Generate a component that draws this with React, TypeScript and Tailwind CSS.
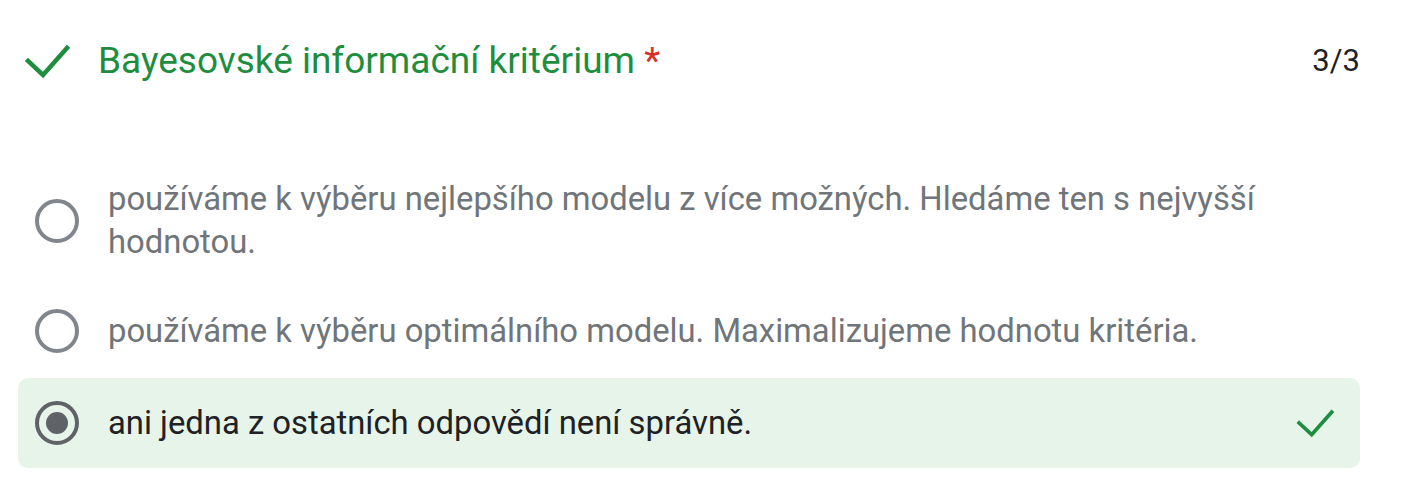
const Radio = ({ selected }: { selected?: boolean }) => (
    <div
        className={`flex h-[44px] w-[44px] shrink-0 items-center justify-center rounded-full border-[4px] ${
            selected ? "border-[#5f6368]" : "border-[#80868b]"
        }`}
    >
        {selected && <div className="h-[22px] w-[22px] rounded-full bg-[#5f6368]" />}
    </div>
);

const Check = ({ className }: { className?: string }) => (
    <svg viewBox="0 0 48 48" className={className} fill="none">
        <path d="M5 24 L20 38 L44 11" stroke="#1e8e3e" strokeWidth="4.5" strokeLinecap="square" />
    </svg>
);

export default function App() {
    return (
        <div className="h-[489px] w-[1407px] overflow-hidden bg-white font-['Roboto',sans-serif]">
            <div className="flex items-center justify-between pl-[23px] pr-[47px] pt-[37px]">
                <div className="flex items-center gap-[27px]">
                    <Check className="h-[48px] w-[48px]" />
                    <span className="text-[37px] leading-[48px] text-[#1e8e3e]">
                        Bayesovské informační kritérium <span className="text-[#d93025]">*</span>
                    </span>
                </div>
                <span className="text-[31px] text-[#202124]">3/3</span>
            </div>

            <div className="mt-[93px] flex items-center gap-[29px] pl-[35px] pr-[47px]">
                <Radio />
                <p className="text-[32.8px] leading-[43px] text-[#70757a]">
                    používáme k výběru nejlepšího modelu z více možných. Hledáme ten s nejvyšší
                    <br />
                    hodnotou.
                </p>
            </div>

            <div className="mt-[45px] flex items-center gap-[29px] pl-[35px] pr-[47px]">
                <Radio />
                <p className="text-[32.8px] leading-[43px] text-[#70757a]">
                    používáme k výběru optimálního modelu. Maximalizujeme hodnotu kritéria.
                </p>
            </div>

            <div className="ml-[18px] mt-[25px] flex h-[90px] w-[1342px] items-center justify-between rounded-[10px] bg-[#e6f4ea] pl-[17px] pr-[25px]">
                <div className="flex items-center gap-[29px]">
                    <Radio selected />
                    <p className="text-[32.8px] leading-[43px] text-[#202124]">
                        ani jedna z ostatních odpovědí není správně.
                    </p>
                </div>
                <Check className="h-[40px] w-[40px]" />
            </div>
        </div>
    );
}
